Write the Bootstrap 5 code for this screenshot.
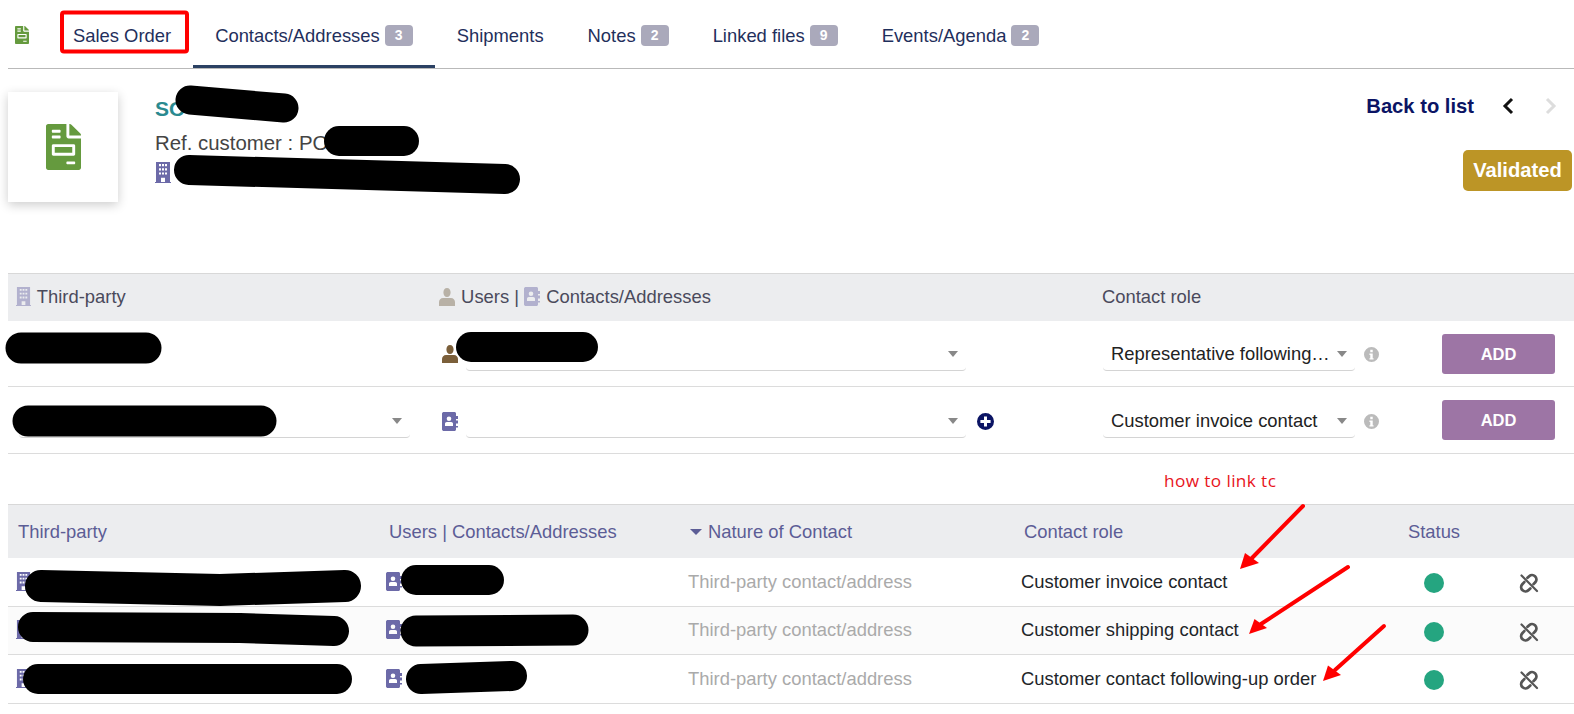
<!DOCTYPE html>
<html lang="en">
<head>
  <meta charset="UTF-8" />
  <meta name="viewport" content="width=device-width, initial-scale=1.0" />
  <title>Sales Order - Contacts/Addresses</title>
  <link href="https://cdn.jsdelivr.net/npm/bootstrap@5.3.0/dist/css/bootstrap.min.css" rel="stylesheet" />
  <style>
    body { font-family: "Liberation Sans", Arial, sans-serif; font-size: 18.4px; color: #222; background: #fff; overflow: hidden; }
    .page-wrap { position: relative; width: 1574px; height: 714px; padding-left: 8px; }

    /* tabs */
    .tab-bar { height: 69px; border-bottom: 1px solid #b9b9b9; align-items: stretch; }
    .tab-icon { width: 14px; height: 18px; margin: 26px 22px 0 7px; color: #659a3e; }
    .tab-link { display: flex; align-items: center; gap: 5px; height: 68px; padding: 3px 22px 0 22px; color: #1f2f5c; text-decoration: none; white-space: nowrap; }
    .tab-link.is-current { border-bottom: 3px solid #2b4163; padding-top: 6px; }
    .tab-count { background: #aaa9bb; color: #fff; font-size: 14px; font-weight: 700; width: 28px; height: 21px; padding: 0; line-height: 21px; border-radius: 4px; }

    /* object header */
    .obj-head { height: 204px; }
    .logo-box { width: 110px; height: 110px; margin-top: 23px; background: #fff; box-shadow: 0 3px 10px rgba(0,0,0,.2); }
    .logo-box svg { width: 35px; height: 46px; color: #659a3e; }
    .obj-info { padding: 26px 0 0 37px; color: #444; font-size: 20.4px; }
    .obj-ref { color: #2a8a90; font-weight: 700; font-size: 21px; height: 35px; line-height: 28px; }
    .obj-sub { height: 26px; line-height: 26px; }
    .obj-owner { height: 22px; margin-top: 6px; }
    .obj-owner svg { width: 16px; height: 21px; display: block; }
    .obj-side { width: 230px; padding-top: 22px; }
    .back-link { color: #0b1464; font-weight: 700; font-size: 20.2px; text-decoration: none; }
    .nav-arrow { width: 14px; height: 20px; }
    .nav-prev { margin-left: 27px; }
    .nav-next { margin: 0 16px 0 29px; }
    .status-tag { background: #bc9526; color: #fff; font-weight: 700; font-size: 20.2px; width: 109px; height: 41px; line-height: 41px; border-radius: 5px; padding: 0; margin: 29px 2px 0 0; }

    /* tables */
    .ct-table { table-layout: fixed; width: 1566px; margin-bottom: 0; font-size: 18.4px; }
    .ct-table > :not(caption) > * > * { border-bottom-color: #dcdcdc; padding: 0; vertical-align: middle; box-shadow: none; }
    .ct-table thead th { background: #ecedef; font-weight: 400; border-top: 1px solid #d8d8d8; border-bottom: 0; }
    .add-table thead th { height: 47px; color: #4a4a5c; padding-left: 8px; }
    .add-table tbody td { height: 66px; padding-top: 2px; }
    .add-table tbody tr:nth-child(2) td { height: 67px; }
    .add-table tbody tr:nth-child(2) .add-btn { margin-top: -2px; }
    .list-table { margin-top: 50px; }
    .list-table thead th { height: 53px; color: #5c5d96; padding: 2px 0 0 8px; }
    .list-table thead th.th-wide { padding-left: 10px; }
    .list-table tbody td { height: 48.5px; padding-left: 5px; }
    .list-table tbody td.td-mute { padding-left: 8px; color: #aaa; }
    .list-table tbody td.td-center { padding-left: 0; padding-right: 4px; text-align: center; }
    .list-table tbody tr:nth-child(2) td { background: #fbfbfb; }
    .ic { display: inline-block; vertical-align: -3px; }
    .ic-thirdparty { width: 15px; height: 19px; color: #6c6aa8; }
    .ic-contact { width: 16px; height: 19px; color: #6c6aa8; }
    .ic-user { width: 16px; height: 18px; color: #7b5f3a; }
    .ic-faint { opacity: .45; margin-right: 1px; }
    .ic-user.ic-faint { color: #7b6a50; }
    .sort-caret { display: inline-block; width: 0; height: 0; margin-right: 6px; vertical-align: 3px; border-left: 6px solid transparent; border-right: 6px solid transparent; border-top: 6px solid #5c5d96; }

    /* combobox look */
    .combo { display: flex; align-items: center; height: 33px; border-bottom: 1px solid #d4d4d4; border-radius: 0 0 4px 4px; color: #222; white-space: nowrap; }
    .combo-text { flex: 1; min-width: 0; padding: 0 0 0 8px; }
    .combo-caret { width: 0; height: 0; margin: 0 8px 0 8px; border-left: 5px solid transparent; border-right: 5px solid transparent; border-top: 6px solid #888; }
    .w-party { width: 391px; margin-left: 11px; }
    .w-person { width: 500px; margin-left: 8px; }
    .w-role { width: 252px; margin-left: 9px; }
    .person-cell { padding-left: 11px !important; }
    .info-ic { width: 15px; height: 15px; margin-left: 9px; color: #bbb; }
    .plus-ic { width: 17px; height: 17px; margin-left: 11px; color: #0b1464; }
    .add-btn { background: #9d75a5; color: #fff; border: 0; border-radius: 3px; font-weight: 700; font-size: 16.500px; width: 113px; height: 40px; padding: 0; margin-left: 12px; }
    .state-dot { display: inline-block; width: 20px; height: 20px; border-radius: 50%; background: #25a580; vertical-align: middle; }
    .unlink-ic { width: 20px; height: 20px; color: #555; vertical-align: middle; }

    /* screenshot annotations */
    .mark-layer { position: absolute; left: 0; top: 0; pointer-events: none; }
    .note-text { position: absolute; left: 1164px; top: 470px; color: #e8141c; font-family: "Open Sans", sans-serif; font-size: 17.200px; letter-spacing: .4px; line-height: 22px; }
  </style>
</head>
<body>
  <svg width="0" height="0" class="position-absolute">
    <symbol id="i-doc" viewBox="0 0 384 512" preserveAspectRatio="none"><path fill="currentColor" d="M288 256H96v64h192v-64zm89-151L279.1 7c-4.5-4.5-10.6-7-17-7H256v128h128v-6.1c0-6.3-2.5-12.4-7-16.9zm-153 31V0H24C10.7 0 0 10.7 0 24v464c0 13.3 10.7 24 24 24h336c13.3 0 24-10.7 24-24V160H248c-13.2 0-24-10.8-24-24zM64 72c0-4.42 3.58-8 8-8h80c4.42 0 8 3.58 8 8v16c0 4.42-3.58 8-8 8H72c-4.42 0-8-3.58-8-8V72zm0 64c0-4.42 3.58-8 8-8h80c4.42 0 8 3.58 8 8v16c0 4.42-3.58 8-8 8H72c-4.42 0-8-3.58-8-8v-16zm256 304c0 4.42-3.58 8-8 8h-80c-4.42 0-8-3.58-8-8v-16c0-4.42 3.58-8 8-8h80c4.42 0 8 3.58 8 8v16zm0-200v96c0 8.84-7.16 16-16 16H80c-8.84 0-16-7.16-16-16v-96c0-8.84 7.16-16 16-16h224c8.84 0 16 7.16 16 16z"/></symbol>
    <symbol id="i-building" viewBox="0 0 16 20" preserveAspectRatio="none"><path fill="currentColor" fill-rule="evenodd" d="M1 0h14v19h1v1H0v-1h1zM4 2v2h2V2zm3 0v2h2V2zm3 0v2h2V2zM4 6v2h2V6zm3 0v2h2V6zm3 0v2h2V6zM4 10v2h2v-2zm3 0v2h2v-2zm3 0v2h2v-2zM6 15v4h4v-4z"/></symbol>
    <symbol id="i-user" viewBox="0 0 16 18" preserveAspectRatio="none"><path fill="currentColor" d="M8 0c2.200 0 3.600 2 3.600 4.400S10.200 9 8 9 4.400 6.800 4.400 4.400 5.800 0 8 0zM4 10h8c2.200 0 4 1.800 4 4v4H0v-4c0-2.200 1.800-4 4-4z"/></symbol>
    <symbol id="i-contact" viewBox="0 0 16 19" preserveAspectRatio="none"><path fill="currentColor" fill-rule="evenodd" d="M2 0h10.500c.800 0 1.500.700 1.500 1.500V4h2v3h-2v1.500h2v3h-2V14h2v1.500h-2v2c0 .800-.700 1.500-1.500 1.500H2c-1.100 0-2-.700-2-1.500v-16C0 .700.900 0 2 0zm5 4.500a2.300 2.300 0 1 0 0 4.600 2.300 2.300 0 0 0 0-4.600zM4.800 10C3.800 10 3 10.800 3 11.800V14h8v-2.200c0-1-.800-1.800-1.800-1.800z"/></symbol>
    <symbol id="i-info" viewBox="0 0 16 16"><path fill="currentColor" fill-rule="evenodd" d="M8 0a8 8 0 1 1 0 16A8 8 0 0 1 8 0zM6.700 3v2.500h2.600V3zM5.800 7v1.500h.900V12h-.900v1.300h4.400V12h-.900V7z"/></symbol>
    <symbol id="i-plus" viewBox="0 0 16 16"><path fill="currentColor" fill-rule="evenodd" d="M8 0a8 8 0 1 1 0 16A8 8 0 0 1 8 0zM6.600 3.200v3.400H3.200v2.800h3.400v3.400h2.800V9.400h3.400V6.600H9.400V3.200z"/></symbol>
    <symbol id="i-unlink" viewBox="0 0 20 20"><path fill="none" stroke="currentColor" stroke-width="2.800" stroke-linecap="round" d="M8.500 4.800l1.700-1.600a4.300 4.300 0 0 1 6.300 5.800l-2 2.100M11.300 15.500l-1.600 1.500a4.300 4.300 0 0 1-6.400-5.800l2-2.100"/><path fill="none" stroke="currentColor" stroke-width="2.200" stroke-linecap="round" d="M2.500 2.500l15.500 15.500"/></symbol>
  </svg>

  <div class="page-wrap">
    <!-- Tabs -->
    <div class="tab-bar d-flex">
      <svg class="tab-icon flex-shrink-0"><use href="#i-doc"/></svg>
      <a class="tab-link" href="#">Sales Order</a>
      <a class="tab-link is-current" href="#">Contacts/Addresses <span class="badge tab-count">3</span></a>
      <a class="tab-link" href="#">Shipments</a>
      <a class="tab-link" href="#">Notes <span class="badge tab-count">2</span></a>
      <a class="tab-link" href="#">Linked files <span class="badge tab-count">9</span></a>
      <a class="tab-link" href="#">Events/Agenda <span class="badge tab-count">2</span></a>
    </div>

    <!-- Object header -->
    <div class="obj-head d-flex">
      <div class="logo-box d-flex align-items-center justify-content-center flex-shrink-0">
        <svg><use href="#i-doc"/></svg>
      </div>
      <div class="obj-info flex-grow-1">
        <div class="obj-ref">SO</div>
        <div class="obj-sub">Ref. customer : PO</div>
        <div class="obj-owner"><svg class="ic-thirdparty"><use href="#i-building"/></svg></div>
      </div>
      <div class="obj-side d-flex flex-column align-items-end">
        <div class="d-flex align-items-center">
          <a class="back-link" href="#">Back to list</a>
          <svg class="nav-arrow nav-prev" viewBox="0 0 14 20"><path d="M11 3L4 10l7 7" fill="none" stroke="#111" stroke-width="3"/></svg>
          <svg class="nav-arrow nav-next" viewBox="0 0 14 20"><path d="M3 3l7 7-7 7" fill="none" stroke="#ddd" stroke-width="3"/></svg>
        </div>
        <span class="badge status-tag">Validated</span>
      </div>
    </div>

    <!-- Add contact -->
    <table class="table ct-table add-table">
      <colgroup><col style="width:423px"><col style="width:663px"><col style="width:336px"><col></colgroup>
      <thead>
        <tr>
          <th><svg class="ic ic-thirdparty ic-faint"><use href="#i-building"/></svg> Third-party</th>
          <th><svg class="ic ic-user ic-faint"><use href="#i-user"/></svg> Users | <svg class="ic ic-contact ic-faint"><use href="#i-contact"/></svg> Contacts/Addresses</th>
          <th>Contact role</th>
          <th></th>
        </tr>
      </thead>
      <tbody>
        <tr>
          <td></td>
          <td class="person-cell">
            <div class="d-flex align-items-center">
              <svg class="ic ic-user flex-shrink-0"><use href="#i-user"/></svg>
              <div class="combo w-person"><span class="combo-text"></span><span class="combo-caret"></span></div>
            </div>
          </td>
          <td>
            <div class="d-flex align-items-center">
              <div class="combo w-role"><span class="combo-text">Representative following…</span><span class="combo-caret"></span></div>
              <svg class="info-ic flex-shrink-0"><use href="#i-info"/></svg>
            </div>
          </td>
          <td><button class="btn add-btn" type="button">ADD</button></td>
        </tr>
        <tr>
          <td><div class="combo w-party"><span class="combo-text"></span><span class="combo-caret"></span></div></td>
          <td class="person-cell">
            <div class="d-flex align-items-center">
              <svg class="ic ic-contact flex-shrink-0"><use href="#i-contact"/></svg>
              <div class="combo w-person"><span class="combo-text"></span><span class="combo-caret"></span></div>
              <svg class="plus-ic flex-shrink-0"><use href="#i-plus"/></svg>
            </div>
          </td>
          <td>
            <div class="d-flex align-items-center">
              <div class="combo w-role"><span class="combo-text">Customer invoice contact</span><span class="combo-caret"></span></div>
              <svg class="info-ic flex-shrink-0"><use href="#i-info"/></svg>
            </div>
          </td>
          <td><button class="btn add-btn" type="button">ADD</button></td>
        </tr>
      </tbody>
    </table>

    <!-- Linked contacts -->
    <table class="table ct-table list-table">
      <colgroup><col style="width:373px"><col style="width:299px"><col style="width:336px"><col style="width:364px"><col style="width:108px"><col></colgroup>
      <thead>
        <tr>
          <th class="th-wide">Third-party</th>
          <th>Users | Contacts/Addresses</th>
          <th class="th-wide"><span class="sort-caret"></span>Nature of Contact</th>
          <th>Contact role</th>
          <th class="text-center ps-0">Status</th>
          <th></th>
        </tr>
      </thead>
      <tbody>
        <tr>
          <td class="ps-2"><svg class="ic ic-thirdparty"><use href="#i-building"/></svg></td>
          <td><svg class="ic ic-contact"><use href="#i-contact"/></svg></td>
          <td class="td-mute">Third-party contact/address</td>
          <td>Customer invoice contact</td>
          <td class="text-center ps-0"><span class="state-dot"></span></td>
          <td class="td-center"><svg class="unlink-ic"><use href="#i-unlink"/></svg></td>
        </tr>
        <tr>
          <td class="ps-2"><svg class="ic ic-thirdparty"><use href="#i-building"/></svg></td>
          <td><svg class="ic ic-contact"><use href="#i-contact"/></svg></td>
          <td class="td-mute">Third-party contact/address</td>
          <td>Customer shipping contact</td>
          <td class="text-center ps-0"><span class="state-dot"></span></td>
          <td class="td-center"><svg class="unlink-ic"><use href="#i-unlink"/></svg></td>
        </tr>
        <tr>
          <td class="ps-2"><svg class="ic ic-thirdparty"><use href="#i-building"/></svg></td>
          <td><svg class="ic ic-contact"><use href="#i-contact"/></svg></td>
          <td class="td-mute">Third-party contact/address</td>
          <td>Customer contact following-up order</td>
          <td class="text-center ps-0"><span class="state-dot"></span></td>
          <td class="td-center"><svg class="unlink-ic"><use href="#i-unlink"/></svg></td>
        </tr>
      </tbody>
    </table>

    <!-- Annotations and redactions drawn over the screenshot -->
    <svg class="mark-layer" width="1574" height="714" viewBox="0 0 1574 714">
      <rect x="62" y="12.500" width="125" height="39" rx="2" fill="none" stroke="#f00" stroke-width="4"/>
      <g fill="none" stroke="#000" stroke-linecap="round" stroke-linejoin="round">
        <path stroke-width="29" d="M190 100L284 108"/>
        <path stroke-width="30" d="M339 141H404"/>
        <path stroke-width="30" d="M189 170L505 179"/>
        <path stroke-width="31" d="M21 348H146"/>
        <path stroke-width="30" d="M471 347H583"/>
        <path stroke-width="31" d="M28 421H261"/>
        <path stroke-width="32" d="M41 586L220 590L345 586"/>
        <path stroke-width="30" d="M416 580H489"/>
        <path stroke-width="30" d="M33 627L240 628L334 631"/>
        <path stroke-width="31" d="M416 631L573 630"/>
        <path stroke-width="30" d="M38 679H337"/>
        <path stroke-width="30" d="M421 679L512 676"/>
      </g>
      <g fill="#f00" stroke="#f00">
        <path stroke-width="4" stroke-linecap="round" d="M1303 506L1252 558"/>
        <path stroke="none" d="M1240 569L1245 553L1259 563z"/>
        <path stroke-width="4" stroke-linecap="round" d="M1348 567L1261 624"/>
        <path stroke="none" d="M1249 634L1254.500 619L1267 628z"/>
        <path stroke-width="4" stroke-linecap="round" d="M1384 626L1335 670"/>
        <path stroke="none" d="M1323 681L1328 665.500L1341 675z"/>
      </g>
    </svg>
    <span class="note-text">how to link tc</span>
  </div>

  <script src="https://cdn.jsdelivr.net/npm/bootstrap@5.3.0/dist/js/bootstrap.bundle.min.js"></script>
</body>
</html>
